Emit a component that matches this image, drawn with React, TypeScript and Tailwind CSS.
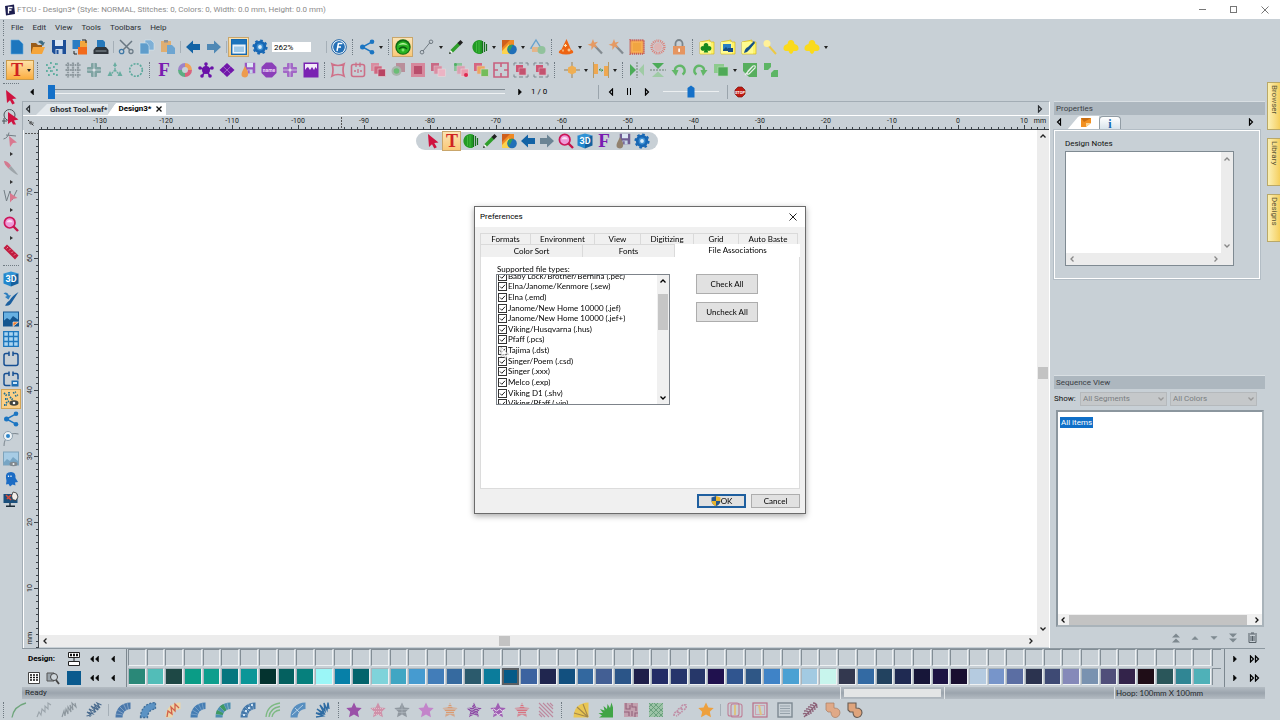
import { useState, type ReactNode } from 'react';
import clsx from 'clsx';

/* ─────────────────────────────────────────────────────────────
   Icon shapes, all drawn on a 16×16 grid.
   ───────────────────────────────────────────────────────────── */

const STAR = 'M8 0.5 10.4 5.4 15.7 6 11.8 9.7 13 15.3 8 12.6 3 15.3 4.2 9.7 0.3 6 5.6 5.4Z';
const FAN = 'M0.5 15.5C0.5 6.5 6 0.8 15.5 0.5V7C10.5 7.4 8 10 7.5 15.5Z';
const POINTER = 'M3 1 13.5 9.5 9.3 10 11.8 14.3 9.3 15.5 7 11.2 4 14Z';
const CLUB = 'M8 1.5A3 3 0 0 1 11 5.5A3.2 3.2 0 1 1 10 11L11 14H5L6 11A3.2 3.2 0 1 1 5 5.5A3 3 0 0 1 8 1.5Z';

function Fan({ fill, line = '#fff', children }: { fill: string; line?: string; children?: ReactNode }) {
  return (
    <>
      <path d={FAN} fill={fill} />
      <path d="M0.8 12 7.8 13M2.2 8 8.2 11.5M4.6 4.6 9.6 9.6M8.5 2 11.4 8M12 0.8 13.5 7.3" stroke={line} strokeWidth="0.6" opacity="0.5" />
      {children}
    </>
  );
}

function StripedStar({ color, id, wavy }: { color: string; id: string; wavy?: boolean }) {
  return (
    <>
      <clipPath id={id}>
        <path d={STAR} />
      </clipPath>
      <g clipPath={`url(#${id})`} stroke={color} strokeWidth="1.5" fill="none">
        {[1, 3.4, 5.8, 8.2, 10.6, 13, 15.2].map((y) => (
          <path key={y} d={wavy ? `M0 ${y}q2-2 4 0t4 0 4 0 4 0` : `M0 ${y}H16`} />
        ))}
      </g>
    </>
  );
}

function Globe({ color }: { color: string }) {
  return (
    <>
      <path d="M10 1.5A7 7 0 1 0 10 14.5Z" fill={color} />
      <path d="M4.5 3v10M7 1.500v13" stroke="#3fbb3c" strokeWidth="1" />
      <path d="M10.500 2v12M12.500 3v10M14.500 5v7" stroke="#176f1c" strokeWidth="1.200" />
    </>
  );
}

function Pencil() {
  return (
    <>
      <path d="M1 15 2.500 11 10 3.500 12.500 6 5 13.500Z" fill="#2f9e2c" />
      <path d="M9.500 4 12.500 1 15 3.500 12 6.500Z" fill="#222" />
      <path d="M1 15 2.500 11 5 13.500Z" fill="#f4f4f4" />
      <path d="M1 15 1.800 12.800 3.200 14.200Z" fill="#111" />
    </>
  );
}

function Shapes() {
  return (
    <>
      <path d="M1 1H13V9L1 13Z" fill="#f08a24" />
      <path d="M1 1H9L1 9Z" fill="#cf5f1c" />
      <path d="M1 15V12L8 5 9 15Z" fill="#fcd34d" />
      <circle cx="11" cy="10.500" r="4.800" fill="#1f6fb8" />
      <path d="M7 8A4.800 4.800 0 0 1 12 5.800L8 13.500Z" fill="#2f9e5c" />
    </>
  );
}

function Wand() {
  return (
    <g opacity="0.85">
      <path d="M7.5 6.5 15 14.5" stroke="#777f85" strokeWidth="2.2" />
      <path d="M6 0 7.2 3.6 11 2.8 8.4 5.6 10.6 9 6.8 7.8 4.4 11 4.4 7 0.6 5.8 4.2 4.4Z" fill="#eb9150" />
    </g>
  );
}

function Squares({ a, b, c }: { a: string; b: string; c: string }) {
  return (
    <>
      <rect x="1" y="1" width="8" height="8" fill={a} />
      <rect x="4" y="4" width="8" height="8" fill={b} stroke="#d9c3cb" strokeWidth="0.6" />
      <rect x="8" y="7" width="7.5" height="7.5" fill={c} stroke="#e6dadd" strokeWidth="0.6" />
    </>
  );
}

function Cross({ color }: { color: string }) {
  return (
    <>
      <path d="M6 1H10Q11 1 11 2V5H14Q15 5 15 6V10Q15 11 14 11H11V14Q11 15 10 15H6Q5 15 5 14V11H2Q1 11 1 10V6Q1 5 2 5H5V2Q5 1 6 1Z" fill={color} />
      <path d="M8 1V15M1 8H15" stroke="#dbe0e6" strokeWidth="0.7" />
      <circle cx="8" cy="8" r="1.500" fill="#dbe0e6" />
    </>
  );
}

function Card({ children }: { children: ReactNode }) {
  return (
    <>
      <path d="M1 3 11 1V3H15V15H1Z" fill="#fdf36a" stroke="#d8b913" strokeWidth="0.7" />
      <path d="M1 3H12V14.5H1Z" fill="#fffb90" />
      {children}
    </>
  );
}

function Share({ color }: { color: string }) {
  return (
    <>
      <path d="M13 2.8 3.5 8 13 13.2" fill="none" stroke={color} strokeWidth="1.5" />
      <circle cx="3.5" cy="8" r="2.5" fill={color} />
      <circle cx="13" cy="2.8" r="2.3" fill={color} />
      <circle cx="13" cy="13.2" r="2.3" fill={color} />
    </>
  );
}

function Gear() {
  return (
    <>
      <circle cx="8" cy="8" r="6.2" fill="#1767b4" />
      <circle cx="8" cy="8" r="6.6" fill="none" stroke="#1767b4" strokeWidth="2" strokeDasharray="2.6 2.58" />
      <circle cx="8" cy="8" r="3.4" fill="#3d8fd2" />
      <circle cx="8" cy="8" r="1.9" fill="#d9ecfa" />
    </>
  );
}

function Magnifier() {
  return (
    <>
      <path d="M10.5 10.5 15 15" stroke="#c4154a" strokeWidth="2.4" />
      <circle cx="6.7" cy="6.7" r="5.3" fill="#ee9ad8" stroke="#cc1558" strokeWidth="1.7" />
      <path d="M3.5 6.2A3.4 3.4 0 0 1 9.8 6.2Z" fill="#fff" opacity="0.7" />
    </>
  );
}

function ThreeD() {
  return (
    <>
      <path d="M0.5 2.5 8 4.5V15.5L0.5 12.5Z" fill="#2186cc" />
      <path d="M15.5 2.5 8 4.5V15.5L15.5 12.5Z" fill="#14609f" />
      <path d="M0.5 2.5 8 0.5 15.5 2.5 8 4.5Z" fill="#2f93d6" />
      <text x="8" y="11" textAnchor="middle" fontSize="9" fontWeight="700" fontFamily="Roboto, sans-serif" fill="#fff">3D</text>
    </>
  );
}

function Floppy({ color }: { color: string }) {
  return (
    <>
      <path d="M1 1H15V15H3L1 13Z" fill={color} />
      <rect x="4" y="1" width="8" height="6" fill="#dbe6f3" />
      <rect x="4.5" y="10" width="7" height="5" fill="#c4d4e6" />
      <rect x="5.5" y="11" width="2" height="4" fill={color} />
    </>
  );
}

const glyph = (text: string, color: string, size = 18) => (
  <text x="8" y="14" textAnchor="middle" fontSize={size} fontWeight="700" fontFamily="'Liberation Serif', serif" fill={color}>
    {text}
  </text>
);

const hoop = (
  <path d="M6 2.5H3Q1 2.5 1 4.5V12.5Q1 14.5 3 14.5H13Q15 14.5 15 12.5V4.5Q15 2.5 13 2.5H10M6 0.5V5M10 0.5V5" fill="none" stroke="#164f93" strokeWidth="1.5" />
);

const arrowLeft = 'M1 8 8 1.5V5H15V11H8V14.5Z';
const arrowRight = 'M15 8 8 1.5V5H1V11H8V14.5Z';

const icons: Record<string, ReactNode> = {
  new: <path d="M2 1H10L14 5V15H2Z" fill="#1c76be" stroke="#61a8dc" strokeWidth="0.6" />,
  open: (
    <>
      <path d="M1 4H6L8 6H12V14H1Z" fill="#9a5c19" />
      <path d="M3 8H15L12 15H1Z" fill="#f5a53b" />
      <path d="M8 3Q12 0 13.5 3.5L15 3 13 7 10.5 4.5" fill="#3d6b82" />
    </>
  ),
  save: <Floppy color="#1d4f98" />,
  convert: (
    <>
      <rect x="0.5" y="1" width="8" height="9" fill="#2a7cc2" />
      <rect x="8" y="2" width="7" height="8" fill="#f2a63d" />
      <rect x="6" y="8" width="9" height="7.5" fill="#f26a1b" />
      <path d="M2 12V15H5M10 1H14V4" fill="none" stroke="#222" />
    </>
  ),
  print: (
    <>
      <path d="M4 1H10L12 3V8H4Z" fill="#2779bb" />
      <path d="M3 8H13L15.500 11V15H0.500V11Z" fill="#30363c" />
      <path d="M2.500 11.500H13.500V12.500H2.500Z" fill="#8c989f" />
    </>
  ),
  cut: (
    <>
      <path d="M2 1 12 11M14 2 5 11" stroke="#697782" strokeWidth="1.5" />
      <circle cx="3.6" cy="12.5" r="2.2" fill="none" stroke="#3f78a6" strokeWidth="1.3" />
      <circle cx="13" cy="12.5" r="2" fill="none" stroke="#6d7d89" strokeWidth="1.3" />
    </>
  ),
  copy: (
    <g stroke="#d5e5f0" strokeWidth="0.6">
      <path d="M6 1H12L15 4V11H6Z" fill="#7fb0d6" />
      <path d="M1 4H8L10 7V15H1Z" fill="#5f9dcb" />
    </g>
  ),
  paste: (
    <>
      <path d="M1 2H11V13H1Z" fill="#dfae71" />
      <path d="M4 1H8V3.5H4Z" fill="#8d9196" />
      <path d="M7 6H12L15 9V15H7Z" fill="#6da5d1" />
    </>
  ),
  undo: <path d={arrowLeft} fill="#1363a5" />,
  redo: <path d={arrowRight} fill="#4f88b5" />,
  redoGray: <path d={arrowRight} fill="#6b8494" />,
  window: (
    <>
      <rect x="0.7" y="0.7" width="14.6" height="14.6" fill="#e9f2f9" stroke="#1668ae" strokeWidth="1.4" />
      <rect x="1" y="1" width="14" height="4.500" fill="#1c74bc" />
      <path d="M3 7.500H13V13H3Z" fill="#9ec9e8" />
    </>
  ),
  gear: <Gear />,
  about: (
    <>
      <circle cx="8" cy="8" r="7.3" fill="#fff" stroke="#1b62a6" />
      <circle cx="8" cy="8" r="5.9" fill="#2470b7" />
      <path d="M6 12 7.4 4.5H11.4M6.8 8H10" fill="none" stroke="#fff" strokeWidth="1.5" />
    </>
  ),
  share: <Share color="#1b75c2" />,
  gauge: (
    <>
      <circle cx="8" cy="8" r="7.7" fill="#0e6a14" />
      <circle cx="8" cy="8.500" r="6.300" fill="#27b321" />
      <path d="M3 6.500Q8 1 13 6.500Q8 4.500 3 6.500Z" fill="#b3f09c" />
      <path d="M4 10Q8 6 12 10" fill="none" stroke="#0a5a10" strokeWidth="1.200" />
      <circle cx="8" cy="11" r="1.500" fill="#7be36a" />
    </>
  ),
  line: (
    <>
      <path d="M4 12 11 3.5" stroke="#707a82" />
      <circle cx="12" cy="2.8" r="1.8" fill="none" stroke="#707a82" />
      <circle cx="3" cy="13.2" r="1.8" fill="none" stroke="#707a82" />
    </>
  ),
  pencil: <Pencil />,
  globe: <Globe color="#229a25" />,
  shapes: <Shapes />,
  outlines: (
    <g opacity="0.7">
      <path d="M6 1 11 9H1Z" fill="none" stroke="#3e8fcb" strokeWidth="1.4" />
      <rect x="2" y="8" width="8" height="5" fill="#f1ab6b" />
      <circle cx="11.5" cy="11" r="4" fill="#7bbd84" />
    </g>
  ),
  wizard: (
    <>
      <path d="M8.500 0 13 10.500Q16 12 15 14Q8 17 1 14Q0 12 3.500 10.500Z" fill="#ee6412" />
      <path d="M7.500 5V8M6 6.500H9M5 10.500V12.500M11 9.500V12.500M9.500 11H12.500" stroke="#ffe3b0" strokeWidth="1.1" fill="none" />
    </>
  ),
  wand: <Wand />,
  frame: (
    <>
      <rect x="1.2" y="1.2" width="13.6" height="13.6" fill="#f7ae51" stroke="#c65b56" strokeWidth="2" strokeDasharray="1.2 0.8" />
      <rect x="4" y="4" width="8" height="8" fill="#f0a541" />
    </>
  ),
  halo: (
    <>
      <circle cx="8" cy="8" r="6.2" fill="none" stroke="#dd7d75" strokeWidth="2.8" strokeDasharray="0.9 0.9" />
      <circle cx="8" cy="8" r="4" fill="#e6a9a5" opacity="0.7" />
    </>
  ),
  lock: (
    <>
      <path d="M4.5 8V4.5A3.5 3.5 0 0 1 11.5 4.5V8" fill="none" stroke="#7b848a" strokeWidth="1.8" />
      <rect x="2" y="7" width="12" height="8.5" fill="#e59560" />
      <rect x="7.3" y="9.5" width="1.6" height="3.4" fill="#fff" />
    </>
  ),
  cardClub: <Card><path d={CLUB} fill="#168a1d" transform="translate(1 3) scale(.75)" /></Card>,
  cardImage: (
    <Card>
      <rect x="3" y="5" width="8" height="6" fill="#2a7fc4" />
      <path d="M3 11 6 8 8 10V12H3Z" fill="#134d80" />
      <rect x="8" y="9" width="5" height="4" fill="#174a86" />
    </Card>
  ),
  cardBrush: <Card><path d="M3 14Q4 9 7 8L13 2 14 4 9 10Q7 13 3 14Z" fill="#155188" /></Card>,
  yellowWand: (
    <>
      <path d="M6 6 14 15" stroke="#ecc944" strokeWidth="2" />
      <circle cx="5" cy="4.5" r="3.5" fill="#fff19a" />
    </>
  ),
  blob: <path d="M8 1Q11 1 11.500 5Q16 6 15.500 10Q15 12.500 10.500 12Q9.500 15 8 15Q6.500 15 5.500 12Q1 12.500 0.500 10Q0 6 4.500 5Q5 1 8 1Z" fill="#fada1c" />,

  /* second bar */
  dots: (
    <path d="M2 3h2M6 1h2M11 2h3M4 6h3M9 5h2M12 8h2M2 9h2M6 9h3M4 13h2M9 12h2M12 13h2" stroke="#61aea0" strokeWidth="2" strokeDasharray="1.8 0.5" />
  ),
  weave: (
    <path d="M3 0.5V15.5M8 0.5V15.5M13 0.5V15.5M0.5 3H15.5M0.5 8H15.5M0.5 13H15.5" stroke="#8e999f" strokeWidth="2.2" strokeDasharray="1.6 0.7" />
  ),
  crossTeal: <Cross color="#7fa3a2" />,
  tree: (
    <>
      <path d="M8 3V8M8 8 3 13M8 8 13 13" stroke="#68ada0" strokeWidth="1.4" strokeDasharray="2 0.8" />
      <path d="M8 0 10 4H6ZM3 9 5.5 14H0.500ZM13 9 15.500 14H10.500Z" fill="#68ada0" />
    </>
  ),
  ring: <circle cx="8" cy="8" r="6.3" fill="none" stroke="#5aa99c" strokeWidth="1.6" strokeDasharray="2 1.3" />,
  bigF: glyph('F', '#7a1bb0', 19),
  wheel: (
    <g fill="none" strokeWidth="4">
      <path d="M8 3A5 5 0 0 1 13 8" stroke="#efa259" />
      <path d="M13 8A5 5 0 0 1 8 13" stroke="#d9637d" />
      <path d="M8 13A5 5 0 0 1 3 8" stroke="#5cae83" />
      <path d="M3 8A5 5 0 0 1 8 3" stroke="#9d82c9" />
    </g>
  ),
  flower: (
    <g fill="#6a12a8">
      <circle cx="8" cy="8" r="4" />
      <path d="M8 8 8 2M8 8 2 6M8 8 14 6M8 8 4 14M8 8 12 14" stroke="#6a12a8" strokeWidth="1.6" />
      <circle cx="8" cy="2" r="1.8" />
      <circle cx="2" cy="6" r="1.8" />
      <circle cx="14" cy="6" r="1.8" />
      <circle cx="4" cy="14" r="1.8" />
      <circle cx="12" cy="14" r="1.8" />
    </g>
  ),
  diamonds: (
    <>
      <path d="M8 1 15.5 8 8 15 0.500 8Z" fill="#7117aa" />
      <path d="M4.300 4.500 11.700 11.500M11.700 4.500 4.300 11.500" stroke="#cbb5de" strokeWidth="0.5" />
    </>
  ),
  spraySave: (
    <>
      <g transform="translate(4 0) scale(.75)"><Floppy color="#9a55c4" /></g>
      <path d="M5 4 8 10Q9 15 5 15.500Q0 15 2 10Z" fill="#ed9b4e" />
    </>
  ),
  nameTag: (
    <>
      <path d="M5 0.500H11L15.500 5V11L11 15.500H5L0.500 11V5Z" fill="#8b3fb9" />
      <text x="8" y="9.800" textAnchor="middle" fontSize="5" fontWeight="700" fontFamily="Roboto, sans-serif" fill="#ecd9f6">name</text>
    </>
  ),
  crossPurple: <Cross color="#a267c6" />,
  skyline: (
    <>
      <rect x="0.500" y="0.500" width="15" height="15" fill="#7a22b2" />
      <path d="M2 8V2H14V7L12.500 5 11 8 9 5 7 8 5 5 3.500 6Z" fill="#f3e9f9" />
    </>
  ),
  warp: <path d="M2 2Q8 5 14 2Q12 8 14 14Q8 11 2 14Q4 8 2 2Z" fill="none" stroke="#cf7088" strokeWidth="1.700" />,
  hoopPink: (
    <>
      <rect x="1.500" y="2.500" width="13" height="12" rx="2" fill="none" stroke="#cc6f87" strokeWidth="1.600" />
      <path d="M6 0.500V5M10 0.500V5M4 9H6M10 9H12M8 7V11" stroke="#cc6f87" strokeWidth="1.300" />
    </>
  ),
  squares: <Squares a="#d98ca0" b="#cf667f" c="#b94463" />,
  target: (
    <>
      <rect x="6" y="1" width="9" height="9" fill="#b98f9b" />
      <circle cx="6.500" cy="9" r="5" fill="#a9b5ad" />
      <circle cx="6.500" cy="9" r="2.800" fill="#6bbd76" />
    </>
  ),
  solidPink: (
    <>
      <rect x="1" y="1" width="14" height="14" fill="#d6889c" />
      <rect x="4" y="4" width="8" height="8" fill="#b94e6c" />
    </>
  ),
  squaresLight: <Squares a="#c96a86" b="#db8ea3" c="#ecb4c4" />,
  squaresDots: (
    <>
      <Squares a="#8cc39a" b="#dba0b2" c="#e99cae" />
      <circle cx="13" cy="13" r="2" fill="#df2950" />
      <circle cx="2.500" cy="2.500" r="1.500" fill="#4fae64" />
    </>
  ),
  squaresMix: <Squares a="#d6677f" b="#eaa960" c="#74bd5a" />,
  crop: <path d="M1 1H15V15H1ZM8 1V5M8 11V15M1 8H5M11 8H15" fill="none" stroke="#c8607f" strokeWidth="1.600" />,
  selectBox: (
    <>
      <path d="M1 3.500V1H3.500M12.500 1H15V3.500M15 12.500V15H12.500M3.500 15H1V12.500M6 1H10M6 15H10" fill="none" stroke="#7a858d" />
      <rect x="3" y="3" width="7" height="7" fill="#cf5573" />
      <rect x="6" y="6" width="7" height="7" fill="#c4526f" stroke="#e4b6c3" strokeWidth="0.600" />
    </>
  ),
  center: (
    <>
      <path d="M8 0V16M0 8H16" stroke="#9f8153" />
      <path d="M8 3.500 12 5.500V10.500L8 12.500 4 10.500V5.500Z" fill="#efae52" />
    </>
  ),
  distribute: (
    <>
      <rect x="1" y="2" width="4" height="10" fill="#efa851" />
      <rect x="11" y="4" width="4" height="10" fill="#efa851" />
      <path d="M0.500 0V16M15.500 0V16" stroke="#b79a66" />
      <path d="M6 8H10M6 8 7.500 6.500M10 8 8.500 9.500" stroke="#3f9346" />
    </>
  ),
  flipH: (
    <>
      <path d="M1 2 7 8 1 14Z" fill="#4cab58" />
      <path d="M15 2 9.500 8 15 14Z" fill="#9fcba5" />
      <path d="M8 0V16" stroke="#6f8275" strokeDasharray="2 1" />
    </>
  ),
  flipV: (
    <>
      <path d="M2 1 8 7 14 1Z" fill="#4cab58" />
      <path d="M2 15 8 9.500 14 15Z" fill="#9fcba5" />
      <path d="M0 8H16" stroke="#6f8275" strokeDasharray="2 1" />
    </>
  ),
  rotateL: (
    <>
      <path d="M4 9A4.800 4.800 0 1 1 11.500 12.500" fill="none" stroke="#62b768" strokeWidth="2.400" />
      <path d="M0.500 8H7.500L5 14Z" fill="#62b768" />
    </>
  ),
  rotateR: (
    <>
      <path d="M12 9A4.800 4.800 0 1 0 4.500 12.500" fill="none" stroke="#62b768" strokeWidth="2.400" />
      <path d="M15.500 8H8.500L11 14Z" fill="#62b768" />
    </>
  ),
  combine: (
    <>
      <rect x="1" y="2" width="10" height="9" fill="#8ccb8d" />
      <rect x="5" y="5" width="10" height="9" fill="#4faa57" stroke="#b8dcb9" strokeWidth="0.600" />
    </>
  ),
  clip: (
    <>
      <path d="M1 1H15V15H7L1 9Z" fill="#57ae5e" />
      <path d="M3 13 11 4Q14 3 13 6L7 12Q4 13 6 9L10 5" fill="none" stroke="#e8eeea" strokeWidth="1.200" />
    </>
  ),
  split: (
    <>
      <path d="M1 1H8V5L5 8H1Z" fill="#5db565" />
      <path d="M15 15H8V11L11 8H15Z" fill="#5db565" />
    </>
  ),

  /* tool column */
  pointer: <path d={POINTER} fill="#cf1340" />,
  pointerRing: (
    <>
      <circle cx="6.500" cy="6" r="5.500" fill="none" stroke="#4d555b" />
      <path d="M1 9V15M-1 12H4" stroke="#4d555b" />
      <path d="M5 3 15.500 10.500 11 11.500 13 15.500H10L8.500 12.500 5 15Z" fill="#cf1340" />
    </>
  ),
  pointerNode: (
    <>
      <path d="M0.500 7Q5 6 6 0.500M3 3 13 4" fill="none" stroke="#737d84" />
      <path d="M6 4 14 10.500 10 11 7 15Z" fill="#d9788f" />
    </>
  ),
  knife: (
    <>
      <path d="M1 1Q5 1 8 6L5.500 8.500Q1 4 1 1Z" fill="#d37a90" />
      <path d="M8 6 15 14.500Q13 15.500 5.500 8.500Z" fill="#9ea5aa" />
    </>
  ),
  pointerW: (
    <>
      <path d="M1 2 3.500 13 7 3 9 12 14 2" fill="none" stroke="#737d84" />
      <path d="M7 5 14.500 10 10 11 7 14.500Z" fill="#d9788f" />
    </>
  ),
  magnifier: <Magnifier />,
  ruler: (
    <>
      <path d="M0.500 4 4 0.500 15.500 11.500 12 15.500Z" fill="#c21c40" />
      <path d="M5 3 3.500 4.500M7.500 5 6 6.500M10 7.500 8.500 9M12.500 10 11 11.500" stroke="#f5bac6" strokeWidth="0.700" />
    </>
  ),
  threeD: <ThreeD />,
  brush: (
    <>
      <path d="M2 14.500Q7 15.500 9 11L15.500 1Q9 5 6.500 9.500Q4.500 10.500 2 14.500Z" fill="#1b5f9f" />
      <path d="M0.500 2.500Q4 0 6 4.500L8 4 5.500 8.500 2 6 4 5Q3 3 0.500 2.500Z" fill="#2f7fbf" />
    </>
  ),
  image: (
    <>
      <rect x="0.500" y="1" width="15" height="14" fill="#67b0e2" />
      <path d="M0.500 10 4 7 7 9 10 5 15.500 9V15H0.500Z" fill="#14558f" />
      <rect x="0.500" y="1" width="15" height="14" fill="none" stroke="#14558f" />
      <path d="M10 15.500V11H15.500Z" fill="#f07c2c" stroke="#fff" strokeWidth="0.600" />
    </>
  ),
  grid: (
    <>
      <rect x="0.700" y="0.700" width="14.600" height="14.600" fill="#a9d4f1" />
      <path d="M0.700 0.700H15.300V15.300H0.700ZM5.500 0.700V15.300M10.500 0.700V15.300M0.700 5.500H15.300M0.700 10.500H15.300" fill="none" stroke="#1d77bd" strokeWidth="1.300" />
    </>
  ),
  hoop,
  hoopImage: (
    <>
      {hoop}
      <rect x="8" y="9" width="8" height="7" fill="#1c6db2" stroke="#c8d0d6" />
      <rect x="10" y="11" width="4" height="2" fill="#cfe6f6" />
    </>
  ),
  stitches: (
    <>
      <path d="M1 2 4 5M6 1V5M10 2 13 1M2 8H5M7 6 10 9M12 5 15 4M3 12 6 10M1 14 4 14" stroke="#1f6f95" strokeWidth="1.800" strokeDasharray="1.500 0.800" />
      <ellipse cx="11" cy="12" rx="4.500" ry="2.800" fill="#40433e" />
      <circle cx="11" cy="12" r="1.300" fill="#fff" />
    </>
  ),
  loop: (
    <>
      <path d="M1 15Q1 8 5 7M8 3Q12 2 15.500 3" fill="none" stroke="#7b868e" />
      <circle cx="5" cy="5" r="4.500" fill="#eef3f6" stroke="#8fa2b0" />
      <circle cx="5" cy="5" r="2" fill="#2f86ca" />
    </>
  ),
  imageEye: (
    <g opacity="0.750">
      <rect x="0.500" y="1" width="15" height="13" fill="#9ccbea" stroke="#6694b2" />
      <path d="M1 11 4 8 7 10 10 6 15 10V14H1Z" fill="#5d97bf" />
      <ellipse cx="10.500" cy="13" rx="4" ry="2.200" fill="#697278" />
      <circle cx="10.500" cy="13" r="1" fill="#fff" />
    </g>
  ),
  ghost: (
    <>
      <path d="M8 1Q13 1 12.500 7L15 11 12 11.500 12.500 14.500 9.500 13.500 7 15.500 5.500 13 3 13.500Q4 10 3 7Q2 1 8 1Z" fill="#1c6cc4" />
      <path d="M5.500 4.500V6M8 4.500V6" stroke="#e8f3fc" strokeWidth="1.200" />
    </>
  ),
  monitor: (
    <>
      <rect x="0.500" y="3" width="14" height="9" fill="#1a4f7c" />
      <path d="M7 12V15M3 15.300H12" stroke="#1b2c3a" strokeWidth="1.400" />
      <path d="M3 4 8 9M8 4 4 8" stroke="#d44b38" strokeWidth="1.600" />
      <path d="M10 1 13.500 2 15 6 13 9.500 9.500 8.500 8.500 5Z" fill="#f1ece8" stroke="#333" strokeWidth="0.800" />
    </>
  ),
  redT: glyph('T', '#cf2222', 18),
  sprayGray: (
    <>
      <g transform="translate(4 0) scale(.75)"><Floppy color="#6f5d95" /></g>
      <path d="M5 4 8 10Q9 15 5 15.500Q0 15 2 10Z" fill="#92826f" />
    </>
  ),

  /* stitch bar */
  arc: <path d="M1 15.500Q3 4 15 1" fill="none" stroke="#6fa57c" strokeWidth="1.300" />,
  zig: <path d="M1 15 3 10 5 13 6 7 9 10 9 4 12 7 12 1 15 3" fill="none" stroke="#9ba4ab" strokeWidth="1.100" />,
  zigDense: <path d="M1 15 3 9 4 14 5 7 7 12 7 5 10 10 9 3 12 8 11 1 15 5 14 1" fill="none" stroke="#8c969d" strokeWidth="1.100" />,
  zigBlue: <path d="M0.500 14 5 13 1 10 7 12 3 7 10 10 5 4 12 8 8 2 14 6 11 1 15.500 3M4 15V10M8 11 9 4M12 8V2" fill="none" stroke="#4b6c8f" strokeWidth="1.100" />,
  fanBlue: <Fan fill="#4a78ab" />,
  fanTooth: (
    <>
      <path d={FAN} fill="#5c93c4" />
      <path d={FAN} fill="none" stroke="#3f6d98" strokeWidth="1.300" strokeDasharray="2 1.500" />
    </>
  ),
  fanRed: (
    <>
      <path d={FAN} fill="#ecd5a8" />
      <path d="M2 15 3 9 7 12 6 5 10 9 10 2 14 6" fill="none" stroke="#d1604b" strokeWidth="1.300" />
    </>
  ),
  fanSteel: <Fan fill="#457db3" line="#dcebf7" />,
  fanGreen: (
    <Fan fill="#4b8fb0">
      <path d="M0.800 12 7.800 13 8.200 11 2 8ZM4.600 4.600 9.600 9.600 11.400 8 8.500 2Z" fill="#3f9a62" />
    </Fan>
  ),
  fanDots: (
    <Fan fill="#4478aa">
      <path d="M3 13h2M5 9h2M8 6h2M11 3h2" stroke="#cfe2f2" strokeWidth="2" />
    </Fan>
  ),
  rainbow: <path d="M1 15Q2 3 15 1M4 15Q5 6 15 4.500M7 15Q8 9 15 8" fill="none" stroke="#7db983" strokeWidth="1.300" />,
  fanFlare: (
    <>
      <path d={FAN} fill="#588fc0" />
      <path d="M2 13 13 3M5 6 9 10" stroke="#d8e8f4" strokeWidth="0.700" />
    </>
  ),
  fanSpiky: <path d="M1 15 8 14 1 11 8 12 2 7 9 11 5 3 10 9 9 1 12 8 13 0.500 14 7" fill="none" stroke="#2f6ca3" strokeWidth="1.400" />,
  starSolid: <path d={STAR} fill="#9a51a8" />,
  starPink: (
    <>
      <path d={STAR} fill="#cf92aa" />
      <path d="M2 6.500H14M4 9.500H12M4 12.500H12" stroke="#e9ccd6" strokeWidth="0.700" strokeDasharray="1 1" />
    </>
  ),
  starGray: (
    <>
      <path d={STAR} fill="#9098a0" />
      <path d="M2 7.500H14M4 10.500H12M8 2V13" stroke="#b6bec5" strokeWidth="0.500" />
    </>
  ),
  starLilac: <path d={STAR} fill="#c385ca" />,
  starStripe: <StripedStar id="st-a" color="#d99a72" />,
  starWave: <StripedStar id="st-b" color="#8d4aa5" wavy />,
  starWave2: (
    <>
      <path d={STAR} fill="#a05fb4" />
      <path d="M2 8q1.500-2 3 0t3 0 3 0 3 0M4 12q1.500-2 3 0t3 0 2 0" stroke="#e9dcef" strokeWidth="1" fill="none" />
    </>
  ),
  starRed: <StripedStar id="st-c" color="#d87381" />,
  hatch: <path d="M1 1 15 15M5 1 15 11M9 1 15 7M12 1 15 4M1 5 11 15M1 9 7 15M1 12 4 15" stroke="#bd8a9f" strokeWidth="1.100" />,
  fanGold: (
    <>
      <path d="M0.500 15.500Q1 1 15.500 0.500V15.500Z" fill="#e9c653" />
      <path d="M15 15 1 11M15 15 4 5M15 15 10 2" stroke="#a4884a" strokeWidth="1.100" />
    </>
  ),
  burst: <path d="M15 15.500H1L4 13.500 0.500 11 5 11 2 7 6.500 8.500 5.500 4 9 7 9.500 2 12 6 13.500 0.500 15 5.500Z" fill="#41a546" />,
  maze: (
    <>
      <rect x="1" y="1" width="14" height="14" fill="#c3a0ae" />
      <path d="M3 1V7H7V3M9 1V5H13V9M1 10H6V14M9 14V9M12 15V11H15" fill="none" stroke="#93617a" strokeWidth="1.100" />
    </>
  ),
  mesh: (
    <>
      <rect x="1" y="1" width="14" height="14" fill="#9cc3a6" />
      <path d="M1 5 5 1M1 10 10 1M1 15 15 1M6 15 15 6M11 15 15 11M1 6 10 15M1 1 15 15M6 1 15 10" stroke="#5c9772" strokeWidth="0.800" />
    </>
  ),
  chain: <path d="M1 14Q1 9 5 10Q7 13 3 14M4 10Q5 5 9 7Q10 11 6 11M8 7Q8 2 13 3Q14 7 10 8" fill="none" stroke="#c08ea6" strokeWidth="1.600" strokeDasharray="2 0.800" />,
  starOrange: <path d={STAR} fill="#eda03e" />,
  appFrame: (
    <>
      <rect x="1" y="1" width="11" height="13" rx="2" fill="none" stroke="#bf7f97" strokeWidth="1.100" />
      <rect x="4" y="2" width="11" height="13" rx="2" fill="none" stroke="#bf7f97" strokeWidth="1.100" />
      <path d="M8 3V13" stroke="#dfc280" strokeWidth="2" />
    </>
  ),
  appFrame2: (
    <>
      <rect x="1" y="1" width="14" height="14" fill="none" stroke="#b97089" strokeWidth="1.200" />
      <rect x="3.500" y="3.500" width="9" height="9" fill="none" stroke="#cda0b0" />
      <path d="M7 3 9 13" stroke="#dfc280" strokeWidth="2" />
    </>
  ),
  lines: (
    <>
      <rect x="1" y="1" width="14" height="14" fill="none" stroke="#7d8992" strokeWidth="1.400" />
      <path d="M3 4H13M3 6.500H13M3 9H13M3 11.500H13" stroke="#96a2ab" />
    </>
  ),
  coil: <path d="M1 12Q4 10 5 14M2 9Q7 8 7 13M4 7Q9 6 9 12M6 5Q11 4 11 10M8 3Q13 2 13 8M11 1Q15 1 15 6M2 15 15 2" fill="none" stroke="#8b6077" strokeWidth="1.300" />,
  patch: <path d="M1 1H9V6Q15 6 15 11Q14 15.500 10 15.500Q6 15 6 10H3L1 8Z" fill="#e0a987" stroke="#a77c62" strokeWidth="0.700" />,
  patchDark: <path d="M1 1H9V6Q15 6 15 11Q14 15.500 10 15.500Q6 15 6 10H3L1 8Z" fill="#dfa47c" stroke="#665b53" strokeWidth="1.100" />,
};

function Icon({ name }: { name: string }) {
  return (
    <svg viewBox="0 0 16 16" className="h-4 w-4 shrink-0 overflow-visible">
      {icons[name]}
    </svg>
  );
}

type Dir = 'left' | 'right' | 'up' | 'down';

const TRI: Record<Dir, string> = {
  left: 'M5.5 1V7L2.5 4Z',
  right: 'M2.5 1V7L5.5 4Z',
  up: 'M1 5.5H7L4 2.5Z',
  down: 'M1 2.5H7L4 5.5Z',
};

function Tri({ dir, open, double }: { dir: Dir; open?: boolean; double?: boolean }) {
  return (
    <svg viewBox={double ? '0 0 12 8' : '0 0 8 8'} className={clsx('h-2 shrink-0', double ? 'w-3' : 'w-2')}>
      <path d={TRI[dir]} fill={open ? 'none' : 'currentColor'} stroke="currentColor" strokeWidth={open ? 1.2 : 0.5} />
      {double && <path d={TRI[dir]} transform="translate(5 0)" fill={open ? 'none' : 'currentColor'} stroke="currentColor" strokeWidth={open ? 1.2 : 0.5} />}
    </svg>
  );
}

const CHEV: Record<Dir, string> = {
  left: 'M5.500 1.500 3 4 5.500 6.500',
  right: 'M2.500 1.500 5 4 2.500 6.500',
  up: 'M1.500 5.500 4 3 6.500 5.500',
  down: 'M1.500 2.500 4 5 6.500 2.500',
};

function Chevron({ dir }: { dir: Dir }) {
  return (
    <svg viewBox="0 0 8 8" className="h-2 w-2 shrink-0">
      <path d={CHEV[dir]} fill="none" stroke="currentColor" strokeWidth="1.3" />
    </svg>
  );
}

/* ─────────────────────────────────────────────────────────────
   Toolbars
   Entries: icon name, '*name' = highlighted, '|' = separator,
   ':' = grip, 'v' = drop-down arrow, '_' = small gap.
   ───────────────────────────────────────────────────────────── */

const MAIN_A = ['new', 'open', 'save', 'convert', 'print', '|', 'cut', 'copy', 'paste', '|', 'undo', 'redo', '|', '*window', 'gear'];
const MAIN_B = [
  '|', 'about', ':', 'share', 'v', ':', '*gauge', '_', 'line', 'v', 'pencil', '_', 'globe', 'v', 'shapes', 'v', 'outlines', ':',
  'wizard', 'v', 'wand', 'wand', 'frame', 'halo', 'lock', ':', 'cardClub', 'cardImage', 'cardBrush', 'yellowWand', 'blob', 'blob', 'v',
];
const EDIT_A = [
  ':', 'dots', 'weave', 'crossTeal', 'tree', 'ring', ':',
  'bigF', 'wheel', 'flower', 'diamonds', 'spraySave', 'nameTag', 'crossPurple', 'skyline', ':',
];
const EDIT_B = [
  'warp', 'hoopPink', 'squares', 'target', 'solidPink', 'squaresLight', '_', 'squaresDots', 'squaresMix', 'crop', 'selectBox', 'selectBox', ':', '_',
];
const EDIT_C = [
  'center', 'v', 'distribute', 'v', ':',
  'flipH', 'flipV', 'rotateL', 'rotateR', 'combine', 'v', 'clip', 'split',
];
const STITCH_A = [
  'arc', 'zig', 'zigDense', 'zigBlue', '|', 'fanBlue', 'fanTooth', 'fanRed', 'fanSteel', 'fanGreen', 'fanDots', 'rainbow', 'fanFlare', 'fanSpiky', ':',
];
const STITCH_B = ['starSolid', 'starPink', 'starGray', 'starLilac', 'starStripe', 'starWave', 'starWave2', 'starRed', 'hatch', ':', '_'];
const STITCH_C = ['fanGold', 'burst', 'maze', 'mesh', 'chain', 'starOrange', '|', 'appFrame', 'appFrame2', 'lines', 'coil'];
const FLOAT_BAR = ['pointer', '*redT', 'globe', 'pencil', 'shapes', 'undo', 'redoGray', 'magnifier', 'threeD', 'bigF', 'sprayGray', 'gear'];
const TOOL_COLUMN = [
  'pointer', 'pointerRing', '_', 'pointerNode', 'v', 'knife', 'v', 'pointerW', 'v', 'magnifier', 'v', 'ruler', ':',
  'threeD', 'brush', 'image', 'grid', 'hoop', 'hoopImage', '*stitches', 'share', 'loop', 'imageEye', 'ghost', 'monitor',
];

function Grip() {
  return (
    <span className="flex w-[6px] shrink-0 justify-center">
      <span className="h-4 border-l border-dotted border-[#6f7a82]" />
    </span>
  );
}

function Bar({ items, size = 'w-[21px]' }: { items: string[]; size?: string }) {
  return (
    <>
      {items.map((item, i) => {
        if (item === '|') return <span key={i} className="mr-px ml-[2px] h-3 w-px shrink-0 bg-[#a5afb7]" />;
        if (item === ':') return <span key={i} className="pr-px"><Grip /></span>;
        if (item === '_') return <span key={i} className="w-[3px] shrink-0" />;
        if (item === 'v') {
          return (
            <button key={i} type="button" aria-label="More" className="flex w-2 shrink-0 justify-center">
              <svg viewBox="0 0 4 3" className="h-[3px] w-1"><path d="M0 0H4L2 3Z" fill="#222" /></svg>
            </button>
          );
        }
        const on = item.startsWith('*');
        const name = on ? item.slice(1) : item;
        return (
          <button
            key={i}
            type="button"
            aria-label={name}
            className={clsx(
              'flex h-5 shrink-0 items-center justify-center',
              size,
              on && 'border border-[#c9a66b] bg-linear-to-b from-[#fbe3b4] to-[#f9c878]',
            )}
          >
            <Icon name={name} />
          </button>
        );
      })}
    </>
  );
}

function TopBars() {
  return (
    <div className="shrink-0">
      <header className="flex h-[19px] items-center bg-white pl-1 text-[8px] text-[#8b8b8b]">
        <svg viewBox="0 0 12 12" className="mr-px h-3 w-3">
          <path d="M1 2 10 0.500 11 10 2 11.500Z" fill="#1c1d4e" />
          <path d="M4.500 9.500V3.500H8.500M4.500 6H7.500" stroke="#fff" strokeWidth="1.300" fill="none" />
        </svg>
        <h1 className="whitespace-nowrap">FTCU - Design3* (Style: NORMAL, Stitches: 0, Colors: 0, Width: 0.0 mm, Height: 0.0 mm)</h1>
        <div className="ml-auto flex items-center gap-6 pr-[11px]">
          <button type="button" aria-label="Minimize" className="w-[7px] border-t border-[#777]" />
          <button type="button" aria-label="Maximize" className="h-[7px] w-[7px] border border-[#777]" />
          <button type="button" aria-label="Close">
            <svg viewBox="0 0 8 8" className="h-2 w-2"><path d="M0.500 0.500 7.500 7.500M7.500 0.500 0.500 7.500" stroke="#777" /></svg>
          </button>
        </div>
      </header>

      <nav className="flex h-[17px] items-center text-[8px] text-[#2a2f33]">
        <Grip />
        <div className="flex gap-[9px] pl-[5px]">
          {['File', 'Edit', 'View', 'Tools', 'Toolbars', 'Help'].map((m) => (
            <button key={m} type="button">{m}</button>
          ))}
        </div>
      </nav>

      <div className="flex h-[22px] items-center">
        <Grip />
        <Bar items={MAIN_A} />
        <input
          aria-label="Zoom"
          defaultValue="262%"
          className="mr-[13px] ml-[2px] h-[10px] w-[39px] shrink-0 bg-white px-[2px] text-[8px] leading-none text-black outline-none"
        />
        <Bar items={MAIN_B} />
      </div>

      <div className="flex h-6 items-center">
        <Grip />
        <button
          type="button"
          aria-label="Text"
          className="flex h-5 w-7 shrink-0 items-center justify-center gap-[2px] border border-[#c99a4d] bg-linear-to-b from-[#fde0a4] to-[#fbae3c]"
        >
          <Icon name="redT" />
          <svg viewBox="0 0 4 3" className="h-[3px] w-1"><path d="M0 0H4L2 3Z" fill="#222" /></svg>
        </button>
        <Bar items={EDIT_A} />
        <Bar items={EDIT_B} size="w-5" />
        <Bar items={EDIT_C} />
      </div>
    </div>
  );
}

function Playback() {
  return (
    <div className="flex h-[19px] shrink-0 items-center text-[8px] text-black">
      <button type="button" aria-label="Back" className="ml-[6px]"><Tri dir="left" /></button>
      <div className="relative mr-[11px] ml-[14px] flex w-[455px] items-center">
        <span className="h-[5px] w-full border-t border-b border-t-[#7c868e] border-b-[#eef1f3]" />
        <input type="range" aria-label="Stitch position" defaultValue={0} className="absolute inset-0 opacity-0" />
        <span className="pointer-events-none absolute left-[-2px] h-[14px] w-[7px] bg-[#1470c8]" />
      </div>
      <button type="button" aria-label="Forward"><Tri dir="right" /></button>
      <span className="ml-[7px] w-[67px]">1 / 0</span>
      <span className="h-[14px] w-px bg-[#9aa4ac]" />
      <div className="flex items-center gap-3 px-2">
        <button type="button" aria-label="Step back"><Tri dir="left" open /></button>
        <button type="button" aria-label="Pause" className="flex gap-[2px]">
          <span className="h-[7px] w-px bg-black" />
          <span className="h-[7px] w-px bg-black" />
        </button>
        <button type="button" aria-label="Step forward"><Tri dir="right" open /></button>
      </div>
      <div className="relative ml-1 flex w-14 items-center justify-center">
        <span className="h-px w-full bg-[#eceff1]" />
        <input type="range" aria-label="Speed" defaultValue={50} className="absolute inset-0 opacity-0" />
        <svg viewBox="0 0 8 13" className="pointer-events-none absolute h-[13px] w-2">
          <path d="M0.500 3 4 0.500 7.500 3V12.500H0.500Z" fill="#1470c8" />
        </svg>
      </div>
      <span className="mr-[6px] ml-2 h-[14px] w-px bg-[#9aa4ac]" />
      <button type="button" aria-label="Stop">
        <svg viewBox="0 0 12 12" className="h-3 w-3">
          <path d="M4 1H8L11 4V8L8 11H4L1 8V4Z" fill="#c01a12" stroke="#7d140e" strokeWidth="0.700" />
          <text x="6" y="7.600" fontSize="4" fontWeight="700" textAnchor="middle" fontFamily="Roboto, sans-serif" fill="#fff">STOP</text>
        </svg>
      </button>
    </div>
  );
}

function ToolColumn() {
  return (
    <aside className="flex w-[22px] shrink-0 flex-col items-center">
      <span className="mt-px mb-[3px] w-4 border-t border-dotted border-[#6f7a82]" />
      {TOOL_COLUMN.map((item, i) => {
        if (item === '_') return <span key={i} className="h-[3px]" />;
        if (item === ':') return <span key={i} className="my-[3px] w-4 border-t border-dotted border-[#6f7a82]" />;
        if (item === 'v') {
          return (
            <span key={i} className="flex h-2 items-center">
              <svg viewBox="0 0 3 4" className="h-1 w-[3px]"><path d="M0 0V4L3 2Z" fill="#333" /></svg>
            </span>
          );
        }
        const on = item.startsWith('*');
        const name = on ? item.slice(1) : item;
        return (
          <button
            key={i}
            type="button"
            aria-label={name}
            className={clsx('flex h-5 w-5 shrink-0 items-center justify-center', on && 'border border-[#d3a557] bg-[#fbcf86]')}
          >
            <Icon name={name} />
          </button>
        );
      })}
    </aside>
  );
}

/* ── Rulers: 66px per 10 units, zero at 919 across, 524 down. ── */
const H_MAJOR = Array.from({ length: 15 }, (_, i) => -130 + i * 10);
const V_MAJOR = [70, 60, 50, 40, 30, 20, 10];

function HorizontalRuler() {
  return (
    <div className="h-[14px] min-w-0 flex-1 overflow-hidden border-b border-[#3c4349]">
      <svg className="h-[13px] w-[1060px] max-w-none" viewBox="0 0 1060 13">
        {Array.from({ length: 160 }, (_, i) => {
          const x = Math.round(919 + (i - 139) * 6.6) + 0.5;
          return <path key={i} d={`M${x} ${(i - 139) % 10 === 0 ? 9 : 11}V13`} stroke="#3c4349" />;
        })}
        {H_MAJOR.map((n) => (
          <text key={n} x={919 + n * 6.6} y="7" textAnchor="middle" fontSize="7" fontFamily="Roboto, sans-serif" fill="#222">{n}</text>
        ))}
        <text x="1001" y="7" textAnchor="middle" fontSize="7" fontFamily="Roboto, sans-serif" fill="#111">mm</text>
        <path d="M302.500 1V13" stroke="#555" strokeDasharray="2 1" />
      </svg>
    </div>
  );
}

function VerticalRuler() {
  return (
    <div className="w-[15px] shrink-0 overflow-hidden border-r border-[#3c4349]">
      <svg className="h-[518px] w-[14px]" viewBox="0 0 14 518">
        {Array.from({ length: 79 }, (_, i) => {
          const y = Math.round(524 - i * 6.6) + 0.5;
          return <path key={i} d={`M${i % 10 === 0 ? 10 : 12} ${y}H14`} stroke="#3c4349" />;
        })}
        {V_MAJOR.map((n) => {
          const y = 524 - n * 6.6;
          return (
            <text key={n} x="8" y={y} transform={`rotate(-90 8 ${y})`} textAnchor="middle" fontSize="7" fontFamily="Roboto, sans-serif" fill="#222">{n}</text>
          );
        })}
        <text x="8" y="508" transform="rotate(-90 8 508)" textAnchor="middle" fontSize="7" fontFamily="Roboto, sans-serif" fill="#111">mm</text>
        <path d="M1 3.500H14" stroke="#555" strokeDasharray="2 1" />
      </svg>
    </div>
  );
}

function DocumentArea() {
  return (
    <main className="flex min-w-0 flex-1 flex-col border-t border-r border-l border-[#a3adb5] border-r-white">
      <div className="flex h-[13px] shrink-0 items-center text-[8px] font-bold text-[#2b2f33]">
        <button type="button" aria-label="Scroll tabs left" className="mr-1 ml-px"><Tri dir="left" open /></button>
        <div className="flex h-full items-end">
          <svg viewBox="0 0 14 12" className="h-3 w-[14px]"><path d="M0 12 11 1H14V12Z" fill="#e4e9ed" /></svg>
          <button type="button" className="h-[11px] bg-linear-to-b from-[#e8edf0] to-[#d5dce1] pr-px leading-[11px]">Ghost Tool.waf*</button>
          <svg viewBox="0 0 10 12" className="h-3 w-[10px]"><path d="M0 12 8 0.500H10V12Z" fill="#fff" stroke="#fff" /></svg>
          <div className="flex h-3 items-center gap-[5px] bg-white pr-1 text-black">
            <button type="button">Design3*</button>
            <button type="button" aria-label="Close tab">
              <svg viewBox="0 0 6 6" className="h-[6px] w-[6px]"><path d="M0.500 0.500 5.500 5.500M5.500 0.500 0.500 5.500" stroke="#111" strokeWidth="1.300" /></svg>
            </button>
          </div>
        </div>
        <button type="button" aria-label="Scroll tabs right" className="mr-[5px] ml-auto"><Tri dir="right" open /></button>
      </div>

      <div className="flex shrink-0 border-t border-white">
        <div className="flex h-[14px] w-4 shrink-0 items-center justify-center">
          <svg viewBox="0 0 8 8" className="h-2 w-2"><path d="M1 1 4 4M4 2V6M2 4H7M5 5 7 7" stroke="#333" strokeDasharray="1.500 0.700" /></svg>
        </div>
        <HorizontalRuler />
      </div>

      <div className="flex min-h-0 flex-1">
        <div className="flex w-4 shrink-0 overflow-hidden border-l border-white">
          <VerticalRuler />
        </div>
        <div className="flex min-w-0 flex-1 flex-col">
          <div className="flex min-h-0 flex-1">
            <div className="relative min-w-0 flex-1 bg-white">
              <div className="absolute top-[2px] left-[377px] flex h-[18px] items-center rounded-full bg-[#c8d0d6] px-[7px]">
                <Bar items={FLOAT_BAR} size="w-[19px]" />
              </div>
            </div>
            <div className="flex w-3 shrink-0 flex-col items-center bg-[#ececec] py-[2px] text-[#222]">
              <Chevron dir="up" />
              <span className="mt-[227px] h-3 w-[10px] bg-[#c3c3c3]" />
              <span className="mt-auto"><Chevron dir="down" /></span>
            </div>
          </div>
          <div className="mb-px flex h-3 shrink-0 items-center bg-[#ececec] pr-[14px] pl-[2px] text-[#222]">
            <Chevron dir="left" />
            <span className="ml-[450px] h-[10px] w-[11px] bg-[#c3c3c3]" />
            <span className="ml-auto"><Chevron dir="right" /></span>
          </div>
        </div>
      </div>
    </main>
  );
}

function PanelTitle({ children }: { children: ReactNode }) {
  return (
    <h2 className="flex h-[14px] shrink-0 items-center border-t border-[#d9dfe3] bg-[#adb7bf] pl-[2px] text-[8px] text-[#3a4045]">
      {children}
    </h2>
  );
}

function Combo({ label, value }: { label: string; value: string }) {
  return (
    <div className="relative flex items-center">
      <select
        aria-label={label}
        disabled
        className="h-[14px] w-[87px] appearance-none border border-[#b5b9bc] bg-[#c5c8ca] pl-[2px] text-[8px] leading-[12px] text-[#7a7e81] opacity-100"
      >
        <option>{value}</option>
      </select>
      <span className="pointer-events-none absolute right-[2px] text-[#999]"><Chevron dir="down" /></span>
    </div>
  );
}

function SidePanel() {
  return (
    <section className="flex w-[215px] shrink-0 flex-col pl-1">
      <PanelTitle>Properties</PanelTitle>
      <div className="flex h-[15px] shrink-0 items-end">
        <button type="button" aria-label="Previous" className="mb-1 ml-px"><Tri dir="left" open /></button>
        <button type="button" aria-label="Notes" className="ml-1 flex h-[14px]">
          <svg viewBox="0 0 32 14" className="h-[14px] w-8">
            <path d="M0 14 11 1Q12 0 14 0H32V14Z" fill="#fff" />
            <path d="M14 2H24V7L19 11H14Z" fill="#f19021" />
            <path d="M14 2H24L17 6Z" fill="#c96e12" />
            <path d="M19 11V7H24Z" fill="#fbd28e" />
          </svg>
        </button>
        <button type="button" aria-label="Info" className="flex h-[14px] w-[22px] items-center justify-center rounded-t-sm border border-b-0 border-[#929da5] bg-linear-to-b from-white to-[#d5e1ea] font-['Liberation_Serif',serif] text-[12px] leading-none font-bold text-[#1668b0]">
          i
        </button>
        <button type="button" aria-label="Next" className="mr-[10px] mb-1 ml-auto"><Tri dir="right" open /></button>
      </div>
      <div className="mr-[5px] h-[149px] shrink-0 border border-white px-[10px] pt-[6px] shadow-[0_0_0_1px_#b3bdc5]">
        <label htmlFor="design-notes" className="block h-[14px] text-[8px] leading-[14px] text-[#111]">Design Notes</label>
        <div className="flex h-[115px] w-[169px] flex-col border border-[#7f8a92] bg-white">
          <div className="flex min-h-0 flex-1">
            <textarea id="design-notes" className="min-w-0 flex-1 resize-none bg-white p-1 text-[8px] outline-none" />
            <div className="flex w-3 flex-col items-center justify-between bg-[#ececec] py-[3px] text-[#888]">
              <Chevron dir="up" />
              <Chevron dir="down" />
            </div>
          </div>
          <div className="flex h-3 items-center justify-between bg-[#ececec] pr-[13px] pl-[2px] text-[#888]">
            <Chevron dir="left" />
            <Chevron dir="right" />
          </div>
        </div>
      </div>

      <div className="mt-24 flex min-h-0 flex-1 flex-col">
        <PanelTitle>Sequence View</PanelTitle>
        <div className="flex shrink-0 items-center gap-[3px] pt-[3px] pb-1 text-[8px] text-[#111]">
          <span className="w-[23px]">Show:</span>
          <Combo label="Show segments" value="All Segments" />
          <Combo label="Show colors" value="All Colors" />
        </div>
        <div className="mr-px ml-[2px] flex min-h-0 flex-1 flex-col border-2 border-[#8b969e] border-r-[#a9b3ba] border-b-[#a9b3ba] bg-white">
          <ul className="flex-1 px-[2px] pt-[5px] text-[8px]">
            <li className="w-fit bg-[#0f6fc8] px-px leading-[11px] text-white">All items</li>
          </ul>
          <div className="flex h-[11px] items-center gap-[2px] bg-[#f0f0f0] px-px text-[#111]">
            <Chevron dir="left" />
            <span className="h-[10px] flex-1 bg-[#c3c3c3]" />
            <span className="pl-1"><Chevron dir="right" /></span>
          </div>
        </div>
        <div className="flex h-[21px] shrink-0 items-center justify-end gap-[11px] pr-2 text-[#7d888f]">
          <button type="button" aria-label="Move to top"><svg viewBox="0 0 8 10" className="h-[10px] w-2"><path d="M0 4.500 4 0.500 8 4.500ZM0 9.500 4 5.500 8 9.500Z" fill="currentColor" /></svg></button>
          <button type="button" aria-label="Move up"><Tri dir="up" /></button>
          <button type="button" aria-label="Move down"><Tri dir="down" /></button>
          <button type="button" aria-label="Move to bottom"><svg viewBox="0 0 8 10" className="h-[10px] w-2"><path d="M0 0.500 4 4.500 8 0.500ZM0 5.500 4 9.500 8 5.500Z" fill="currentColor" /></svg></button>
          <button type="button" aria-label="Delete">
            <svg viewBox="0 0 9 11" className="h-[11px] w-[9px]"><path d="M0 2H9M3 1H6M1 3V10.500H8V3M3 4V9M4.500 4V9M6 4V9" fill="none" stroke="#555f66" strokeWidth="1" /></svg>
          </button>
        </div>
      </div>
    </section>
  );
}

/* ── Thread palette ── */
const THREADS = [
  '#2a8878', '#52bdb8', '#1e4845', '#0a9c86', '#0d9e8d', '#06767f', '#0b9698', '#04332f', '#04605f', '#06807d',
  '#9bf6f7', '#0780a8', '#03646c', '#7fd3da', '#40a6c3', '#469bd0', '#427db9', '#366a9f', '#2b5a6c', '#0b7c9b',
  '#045a88', '#3c63a0', '#20264f', '#12507f', '#33689f', '#435f94', '#2b5588', '#1f1f4a', '#232c66', '#26356b',
  '#263769', '#20114e', '#30558f', '#2f5786', '#3f83c7', '#4aa1d3', '#a2cae2', '#c8f5ed', '#33384f', '#336aa3',
  '#22425f', '#1f2a52', '#171639', '#1d1444', '#190f30', '#b5cbe0', '#7795ca', '#5b6ea3', '#2b334f', '#3e4a74',
  '#8589b9', '#7992b0', '#504f7a', '#33234a', '#1f0d17', '#2a565a', '#308694', '#4fb1b8',
];

function Palette() {
  const [active, setActive] = useState(20);
  return (
    <div className="flex h-[39px] shrink-0 border-t border-[#8d98a0] text-black">
      <div className="flex w-[105px] flex-col border-r border-[#7c878f] text-[8px]">
        <div className="flex h-[19px] items-center pl-[6px]">
          <span className="w-10 font-bold">Design:</span>
          <svg viewBox="0 0 12 14" className="h-[14px] w-3">
            <path d="M0.500 0.500H11.500V5.500H0.500ZM0.500 9.500H11.500V13.500H0.500ZM6 5.500V9" fill="#fff" stroke="#222" />
            <path d="M2 3H10" stroke="#111" strokeWidth="2.500" strokeDasharray="2 1" />
          </svg>
          <button type="button" aria-label="First design color" className="ml-2"><Tri dir="left" double /></button>
          <button type="button" aria-label="Previous design color" className="ml-[9px]"><Tri dir="left" /></button>
        </div>
        <div className="flex h-[19px] items-center pl-[6px]">
          <svg viewBox="0 0 12 12" className="h-3 w-3">
            <path d="M0.500 0.500H11.500V11.500H0.500Z" fill="#fff" stroke="#444" />
            <path d="M2 3H11M2 5.500H11M2 8H11" stroke="#111" strokeWidth="1.600" strokeDasharray="2 1" />
          </svg>
          <svg viewBox="0 0 14 14" className="ml-[6px] h-[14px] w-[14px]">
            <path d="M1 2H8V10H1Z" fill="#9ba5ac" stroke="#555" />
            <circle cx="8" cy="6" r="3.500" fill="#cfd6db" stroke="#444" />
            <path d="M10 9 13 13" stroke="#444" strokeWidth="1.800" />
          </svg>
          <span className="ml-[7px] h-[14px] w-[14px] bg-[#0a5a8e]" />
          <button type="button" aria-label="First thread" className="ml-[7px]"><Tri dir="left" double /></button>
          <button type="button" aria-label="Previous thread" className="ml-[9px]"><Tri dir="left" /></button>
        </div>
      </div>
      <div className="flex min-w-0 flex-1 border-r border-[#7c878f] pr-[3px] pl-px">
        {THREADS.map((color, i) => (
          <div key={i} className="flex min-w-0 flex-1 flex-col">
            <span className="mr-px mb-[2px] h-[17px] border border-[#828d95] border-r-[#eef1f3] border-b-[#eef1f3]" />
            <button
              type="button"
              aria-label={`Thread ${i + 1}`}
              onClick={() => setActive(i)}
              className={clsx('mr-px h-[17px] border', i === active ? 'border-2 border-[#5b5f63]' : 'border-[#a9b3ba] border-r-[#eef1f3] border-b-[#eef1f3]')}
              style={{ backgroundColor: color }}
            />
          </div>
        ))}
        <div className="flex w-[9px] shrink-0 flex-col">
          <span className="mb-[2px] h-[17px] border-t border-l border-[#828d95]" />
          <span className="h-[17px] border-t border-l border-[#828d95]" />
        </div>
      </div>
      <div className="flex w-10 flex-col">
        {['design', 'thread'].map((row) => (
          <div key={row} className="flex h-[19px] items-center gap-[9px] pl-[6px]">
            <button type="button" aria-label={`Next ${row} color`}><Tri dir="right" /></button>
            <button type="button" aria-label={`Last ${row} color`}><Tri dir="right" open double /></button>
          </div>
        ))}
      </div>
    </div>
  );
}

function StatusBar() {
  return (
    <footer className="flex h-3 shrink-0 items-center bg-linear-to-b from-[#b4bcc3] via-[#9ba4ad] to-[#b4bcc3] text-[8px] text-[#23282c]">
      <span className="flex-1 pl-[3px]">Ready</span>
      <span className="h-full w-px bg-[#e0e4e7]" />
      <span className="mx-[3px] h-2 w-[97px] bg-[#e3e5e6]" />
      <span className="w-[170px] self-stretch border-l border-[#e0e4e7]" />
      <span className="w-[151px] self-stretch border-l border-[#e0e4e7] pl-px font-['Lato',sans-serif] leading-3">Hoop: 100mm X 100mm</span>
    </footer>
  );
}

/* ─────────────────────────────────────────────────────────────
   Preferences dialog
   ───────────────────────────────────────────────────────────── */

const FILE_TYPES = [
  'Baby Lock/Brother/Bernina (.pec)',
  'Elna/Janome/Kenmore (.sew)',
  'Elna (.emd)',
  'Janome/New Home 10000 (.jef)',
  'Janome/New Home 10000 (.jef+)',
  'Viking/Husqvarna (.hus)',
  'Pfaff (.pcs)',
  'Tajima (.dst)',
  'Singer/Poem (.csd)',
  'Singer (.xxx)',
  'Melco (.exp)',
  'Viking D1 (.shv)',
  'Viking/Pfaff (.vip)',
];

const UPPER_TABS = [
  { name: 'Formats', width: 'w-[50px]' },
  { name: 'Environment', width: 'w-16' },
  { name: 'View', width: 'w-[46px]' },
  { name: 'Digitizing', width: 'w-[53px]' },
  { name: 'Grid', width: 'w-[45px]' },
  { name: 'Auto Baste', width: 'w-[59px]' },
];

const TAB = 'border-t border-r border-[#dadada] bg-[#f0f0f0] leading-[11px]';
const PUSH = 'flex items-center justify-center border border-[#adadad] bg-[#e1e1e1]';

function Preferences() {
  const [checked, setChecked] = useState<boolean[]>(() => FILE_TYPES.map(() => true));

  return (
    <div className="pointer-events-none fixed inset-0 flex items-center justify-center">
      <div
        role="dialog"
        aria-label="Preferences"
        className="pointer-events-auto flex h-[308px] w-[332px] flex-col border border-[#6b6b6b] bg-[#f0f0f0] font-['Lato',sans-serif] text-[8px] text-black shadow-[0_2px_6px_rgba(0,0,0,0.35)]"
      >
        <div className="flex h-5 shrink-0 items-center justify-between bg-white pr-2 pl-[5px]">
          <h2 className="font-['Roboto',sans-serif]">Preferences</h2>
          <button type="button" aria-label="Close dialog">
            <svg viewBox="0 0 8 8" className="h-2 w-2"><path d="M0.500 0.500 7.500 7.500M7.500 0.500 0.500 7.500" stroke="#222" /></svg>
          </button>
        </div>

        <div className="mx-[5px] mt-[6px] flex min-h-0 flex-1 flex-col">
          <div role="tablist" className="flex flex-col">
            <div className="flex h-[11px] border-l border-[#dadada]">
              {UPPER_TABS.map((t) => (
                <button key={t.name} type="button" role="tab" aria-selected={false} className={clsx(TAB, t.width)}>{t.name}</button>
              ))}
            </div>
            <div className="flex h-[13px] border-l border-[#dadada]">
              <button type="button" role="tab" aria-selected={false} className={clsx(TAB, 'w-[102px]')}>Color Sort</button>
              <button type="button" role="tab" aria-selected={false} className={clsx(TAB, 'w-[92px]')}>Fonts</button>
              <button type="button" role="tab" aria-selected className="flex-1 bg-white leading-[11px]">File Associations</button>
            </div>
          </div>

          <div role="tabpanel" className="flex min-h-0 flex-1 items-start border border-t-0 border-[#dcdcdc] bg-white pt-[7px] pl-[15px]">
            <div>
              <h3 className="h-[10px] pl-px leading-[10px]">Supported file types:</h3>
              <div className="flex h-[131px] w-[174px] border border-[#7d838a]">
                <ul className="flex-1 overflow-hidden">
                  <li className="-mt-1">
                    <ul className="flex h-[138px] flex-col">
                      {FILE_TYPES.map((name, i) => (
                        <li key={name} className="flex min-h-0 flex-1 items-center">
                          <label className="flex items-center gap-px pl-px leading-[9px] whitespace-nowrap">
                            <span className="grid h-[9px] w-[9px]">
                              <input
                                type="checkbox"
                                checked={checked[i]}
                                onChange={() => setChecked(checked.map((c, j) => (j === i ? !c : c)))}
                                className="peer col-start-1 row-start-1 h-[9px] w-[9px] appearance-none border border-[#333] bg-white"
                              />
                              <svg viewBox="0 0 9 9" className="pointer-events-none invisible col-start-1 row-start-1 h-[9px] w-[9px] peer-checked:visible">
                                <path d="M2 4.500 3.800 6.300 7 2.800" fill="none" stroke="#222" />
                              </svg>
                            </span>
                            {name}
                          </label>
                        </li>
                      ))}
                    </ul>
                  </li>
                </ul>
                <div className="flex w-3 flex-col items-center bg-[#f0f0f0] py-[2px]">
                  <Chevron dir="up" />
                  <span className="mt-[9px] h-9 w-[10px] bg-[#c6c6c6]" />
                  <span className="mt-auto"><Chevron dir="down" /></span>
                </div>
              </div>
            </div>
            <div className="mt-[10px] ml-[26px] flex flex-col gap-2">
              <button type="button" onClick={() => setChecked(FILE_TYPES.map(() => true))} className={clsx(PUSH, 'h-5 w-[62px]')}>Check All</button>
              <button type="button" onClick={() => setChecked(FILE_TYPES.map(() => false))} className={clsx(PUSH, 'h-5 w-[62px]')}>Uncheck All</button>
            </div>
          </div>
        </div>

        <div className="flex shrink-0 justify-end gap-[5px] pt-[5px] pr-[5px] pb-[5px]">
          <button type="button" className="flex h-[14px] w-[49px] items-center justify-center border-2 border-[#1f5f9f] bg-[#e1e1e1]">
            <svg viewBox="0 0 10 10" className="h-[10px] w-[10px]">
              <path d="M5 0 9.500 1.500V5Q9 8.500 5 10Z" fill="#e9b52c" />
              <path d="M5 0 0.500 1.500V5Q1 8.500 5 10Z" fill="#24568f" />
              <path d="M5 5H0.600Q1 8.500 5 10Z" fill="#e9b52c" />
              <path d="M5 5H9.400Q9 8.500 5 10Z" fill="#24568f" />
            </svg>
            OK
          </button>
          <button type="button" className={clsx(PUSH, 'h-[14px] w-[49px]')}>Cancel</button>
        </div>
      </div>
      {/* mouse pointer over the list */}
      <svg viewBox="0 0 10 14" className="absolute top-[346px] left-[500px] h-[14px] w-[10px]">
        <path d="M1 1V11L3.500 8.800 5 12.500 6.800 11.700 5.300 8.200H8.500Z" fill="#fff" stroke="#888" strokeWidth="0.600" opacity="0.800" />
      </svg>
    </div>
  );
}

export default function App() {
  return (
    <div className="flex h-screen flex-col overflow-hidden bg-[#c8d0d6] font-['Roboto',sans-serif] leading-none">
      <TopBars />

      <div className="flex min-h-0 flex-1">
        <ToolColumn />
        <div className="flex min-w-0 flex-1 flex-col">
          <Playback />
          <div className="flex min-h-0 flex-1">
            <DocumentArea />
            <SidePanel />
          </div>
          <Palette />
          <StatusBar />
        </div>
        <div className="flex w-[15px] shrink-0 flex-col items-end gap-2">
          {['Browser', 'Library', 'Designs'].map((t) => (
            <button
              key={t}
              type="button"
              className="flex h-12 w-[13px] items-center border border-r-0 border-[#b9a868] bg-linear-to-r from-[#fbf0b4] to-[#f5cf5b] pt-[2px] text-[8px] text-[#5c5636] [writing-mode:vertical-rl]"
            >
              {t}
            </button>
          ))}
        </div>
      </div>

      <div className="flex h-[21px] shrink-0 items-center">
        <Grip />
        <Bar items={STITCH_A} size="w-[25px]" />
        <Bar items={STITCH_B} size="w-6" />
        <Bar items={STITCH_C} size="w-[25px]" />
        <Bar items={['patch', 'patchDark']} size="w-[22px]" />
      </div>
      <Preferences />
    </div>
  );
}
